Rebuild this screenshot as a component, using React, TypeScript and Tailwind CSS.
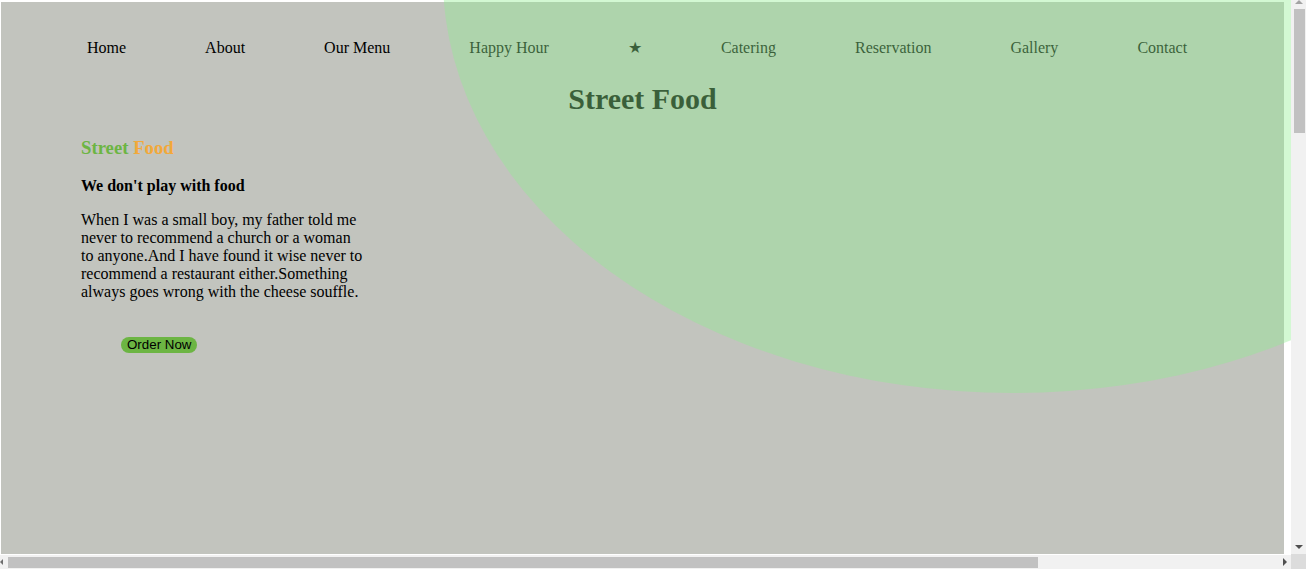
const navItems = [
  "Home",
  "About",
  "Our Menu",
  "Happy Hour",
  "★",
  "Catering",
  "Reservation",
  "Gallery",
  "Contact",
];

export default function App() {
  return (
    <div className="grid h-[569px] w-[1306px] grid-cols-[1291px_15px] grid-rows-[554px_15px] bg-white">
      {/* page viewport */}
      <main className="relative overflow-hidden pt-[2px] pl-[1px] font-['Liberation_Serif','Times_New_Roman',serif] text-black">
        <div className="w-[1283px] h-[2380px] bg-[#c2c4be]">
          <nav className="pt-[37px] pl-[86px]">
            <ul className="flex gap-[79px] text-[16px] leading-[18px]">
              {navItems.map((item) => (
                <li key={item} className="whitespace-nowrap">
                  <a href="#">{item}</a>
                </li>
              ))}
            </ul>
          </nav>

          <h1 className="mt-[25px] text-center text-[30px] leading-[34px] font-bold">
            Street Food
          </h1>

          <section className="pl-[80px]">
            <h3 className="mt-[21px] text-[18.72px] leading-[22px] font-bold">
              <span className="text-[#6cb543]">Street</span>{" "}
              <span className="text-[#f2a93b]">Food</span>
            </h3>
            <h4 className="mt-[18px] text-[16px] leading-[18px] font-bold">
              We don't play with food
            </h4>
            <p className="mt-[16px] w-[284px] text-[16px] leading-[18px]">
              When I was a small boy, my father told me never to recommend a
              church or a woman to anyone.And I have found it wise never to
              recommend a restaurant either.Something always goes wrong with
              the cheese souffle.
            </p>
            <button className="mt-[36px] ml-[40px] block rounded-full bg-[#6cb543] px-[6px] font-['Liberation_Sans',Arial,sans-serif] text-[13.33px] leading-[16px] text-black">
              Order Now
            </button>
          </section>
        </div>

        {/* translucent blob over everything */}
        <div className="pointer-events-none absolute left-[443px] top-[-437px] z-10 h-[830px] w-[1140px] rounded-[50%] bg-[#90ee90] opacity-40" />
      </main>

      {/* vertical scrollbar */}
      <div className="flex flex-col items-center bg-[#f1f1f1]">
        <div className="h-0 w-0 border-x-[4px] border-b-[4px] border-x-transparent border-b-[#a3a3a3]" />
        <div className="mt-[5px] ml-[1px] h-[124px] w-[11px] bg-[#c1c1c1]" />
        <div className="mt-auto mb-[5px] h-0 w-0 border-x-[4px] border-t-[4px] border-x-transparent border-t-[#505050]" />
      </div>

      {/* horizontal scrollbar */}
      <div className="flex items-center border-t border-white bg-[#f1f1f1]">
        <div className="h-0 w-0 border-y-[3px] border-r-[3px] border-y-transparent border-r-[#6e6e6e]" />
        <div className="ml-[5px] h-[11px] w-[1030px] bg-[#c1c1c1]" />
        <div className="ml-[245px] h-0 w-0 border-y-[4px] border-l-[4px] border-y-transparent border-l-[#505050]" />
      </div>

      {/* corner */}
      <div className="bg-[#dcdcdc]" />
    </div>
  );
}
